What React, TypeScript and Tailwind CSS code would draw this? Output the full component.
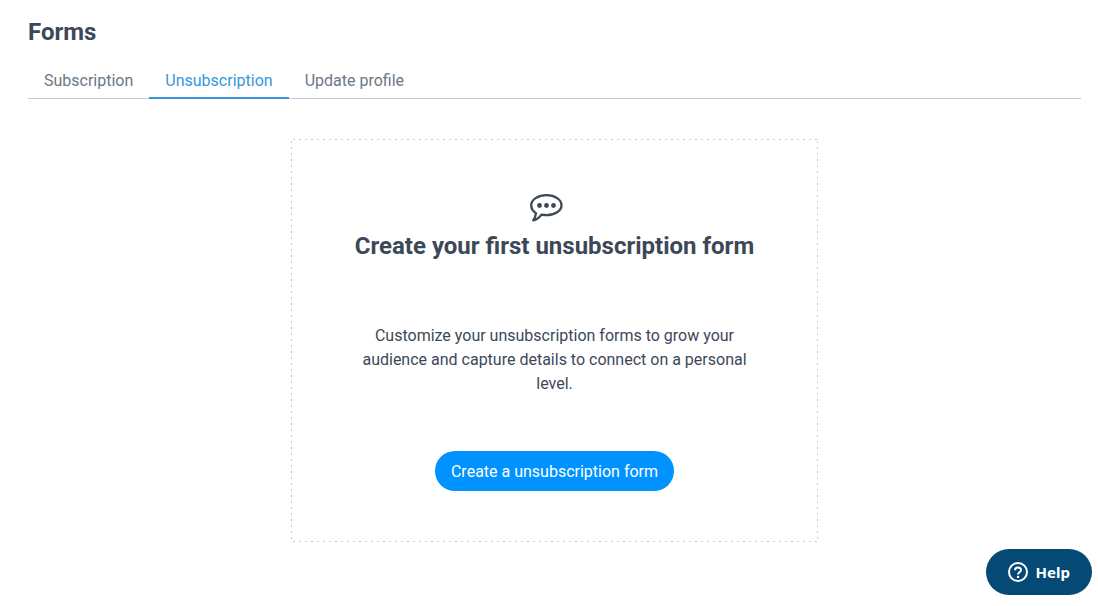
const tabs = ["Subscription", "Unsubscription", "Update profile"];

function SpeechBubble() {
  return (
    <svg width="36" height="30" viewBox="0 0 36 30" fill="none" aria-hidden="true">
      <path
        d="M17.500 2.200C25.900 2.200 32.500 6.600 32.500 12.200S25.900 22.200 17.500 22.200c-1.800 0-3.500-.2-5-.5C10.500 24.500 7.800 26.700 4.200 27.400c1.500-2 2.500-4.400 2.800-7.200C4 18.400 2.200 15.500 2.200 12.200 2.200 6.600 9.100 2.200 17.500 2.200Z"
        stroke="currentColor"
        strokeWidth="2.300"
        strokeLinejoin="round"
      />
      <circle cx="10.500" cy="12.500" r="2.400" fill="currentColor" />
      <circle cx="17.500" cy="12.500" r="2.400" fill="currentColor" />
      <circle cx="24.500" cy="12.500" r="2.400" fill="currentColor" />
    </svg>
  );
}

function QuestionIcon() {
  return (
    <svg width="20" height="20" viewBox="0 0 20 20" fill="none" aria-hidden="true">
      <circle cx="10" cy="10" r="9" stroke="currentColor" strokeWidth="2" />
      <path d="M7 8.200C7 6.500 8.300 5.500 10 5.500s3 1 3 2.500c0 2.200-3 2.200-3 4.500" stroke="currentColor" strokeWidth="2" />
      <circle cx="10" cy="14.900" r="1.200" fill="currentColor" />
    </svg>
  );
}

export default function App() {
  return (
    <div className="min-h-screen bg-white pl-7 pr-[17px] pt-4 font-['Roboto',sans-serif] text-base text-[#3c4858]">
      <h1 className="text-2xl font-bold">Forms</h1>

      <nav className="mt-4 flex border-b border-[#c0ccda]">
        {tabs.map((tab) => (
          <a
            key={tab}
            href="#"
            className={
              tab === "Unsubscription"
                ? "-mb-px border-b-2 border-[#3498db] px-4 pt-[5px] pb-1 text-[#3498db]"
                : "-mb-px border-b-2 border-transparent px-4 pt-[5px] pb-1 text-[#6b7785]"
            }
          >
            {tab}
          </a>
        ))}
      </nav>

      {/* short dashes, wider gaps than border-dashed gives */}
      <main className="mx-auto mt-10 flex w-1/2 flex-col items-center bg-[linear-gradient(90deg,transparent_2px,#c8c8cc_2px,#c8c8cc_4px,transparent_4px),linear-gradient(90deg,transparent_2px,#c8ccd2_2px,#c8ccd2_4px,transparent_4px),linear-gradient(transparent_2px,#c8c8cc_2px,#c8c8cc_4px,transparent_4px),linear-gradient(transparent_2px,#c8ccd2_2px,#c8ccd2_4px,transparent_4px)] bg-[length:6px_1px,6px_1px,1px_6px,1px_6px] bg-[position:left_top,left_bottom,left_top,right_top] [background-repeat:repeat-x,repeat-x,repeat-y,repeat-y] px-14 pt-[54px] pb-[51px] text-center">
        <div className="mr-4">
          <SpeechBubble />
        </div>
        <h2 className="mt-[7px] text-2xl font-bold whitespace-nowrap">Create your first unsubscription form</h2>
        <p className="mt-[62px] px-3">
          Customize your unsubscription forms to grow your audience and capture details to connect on a personal level.
        </p>
        <button className="mt-[55px] h-10 rounded-full bg-[#0092ff] px-4 pt-0.5 text-white">
          Create a unsubscription form
        </button>
      </main>

      <button className="fixed right-1.5 bottom-[11px] flex h-[46px] items-center gap-2 rounded-full bg-[#044a75] px-[22px] font-['Noto_Sans',sans-serif] text-[15px] font-bold text-white">
        <QuestionIcon />
        Help
      </button>
    </div>
  );
}
